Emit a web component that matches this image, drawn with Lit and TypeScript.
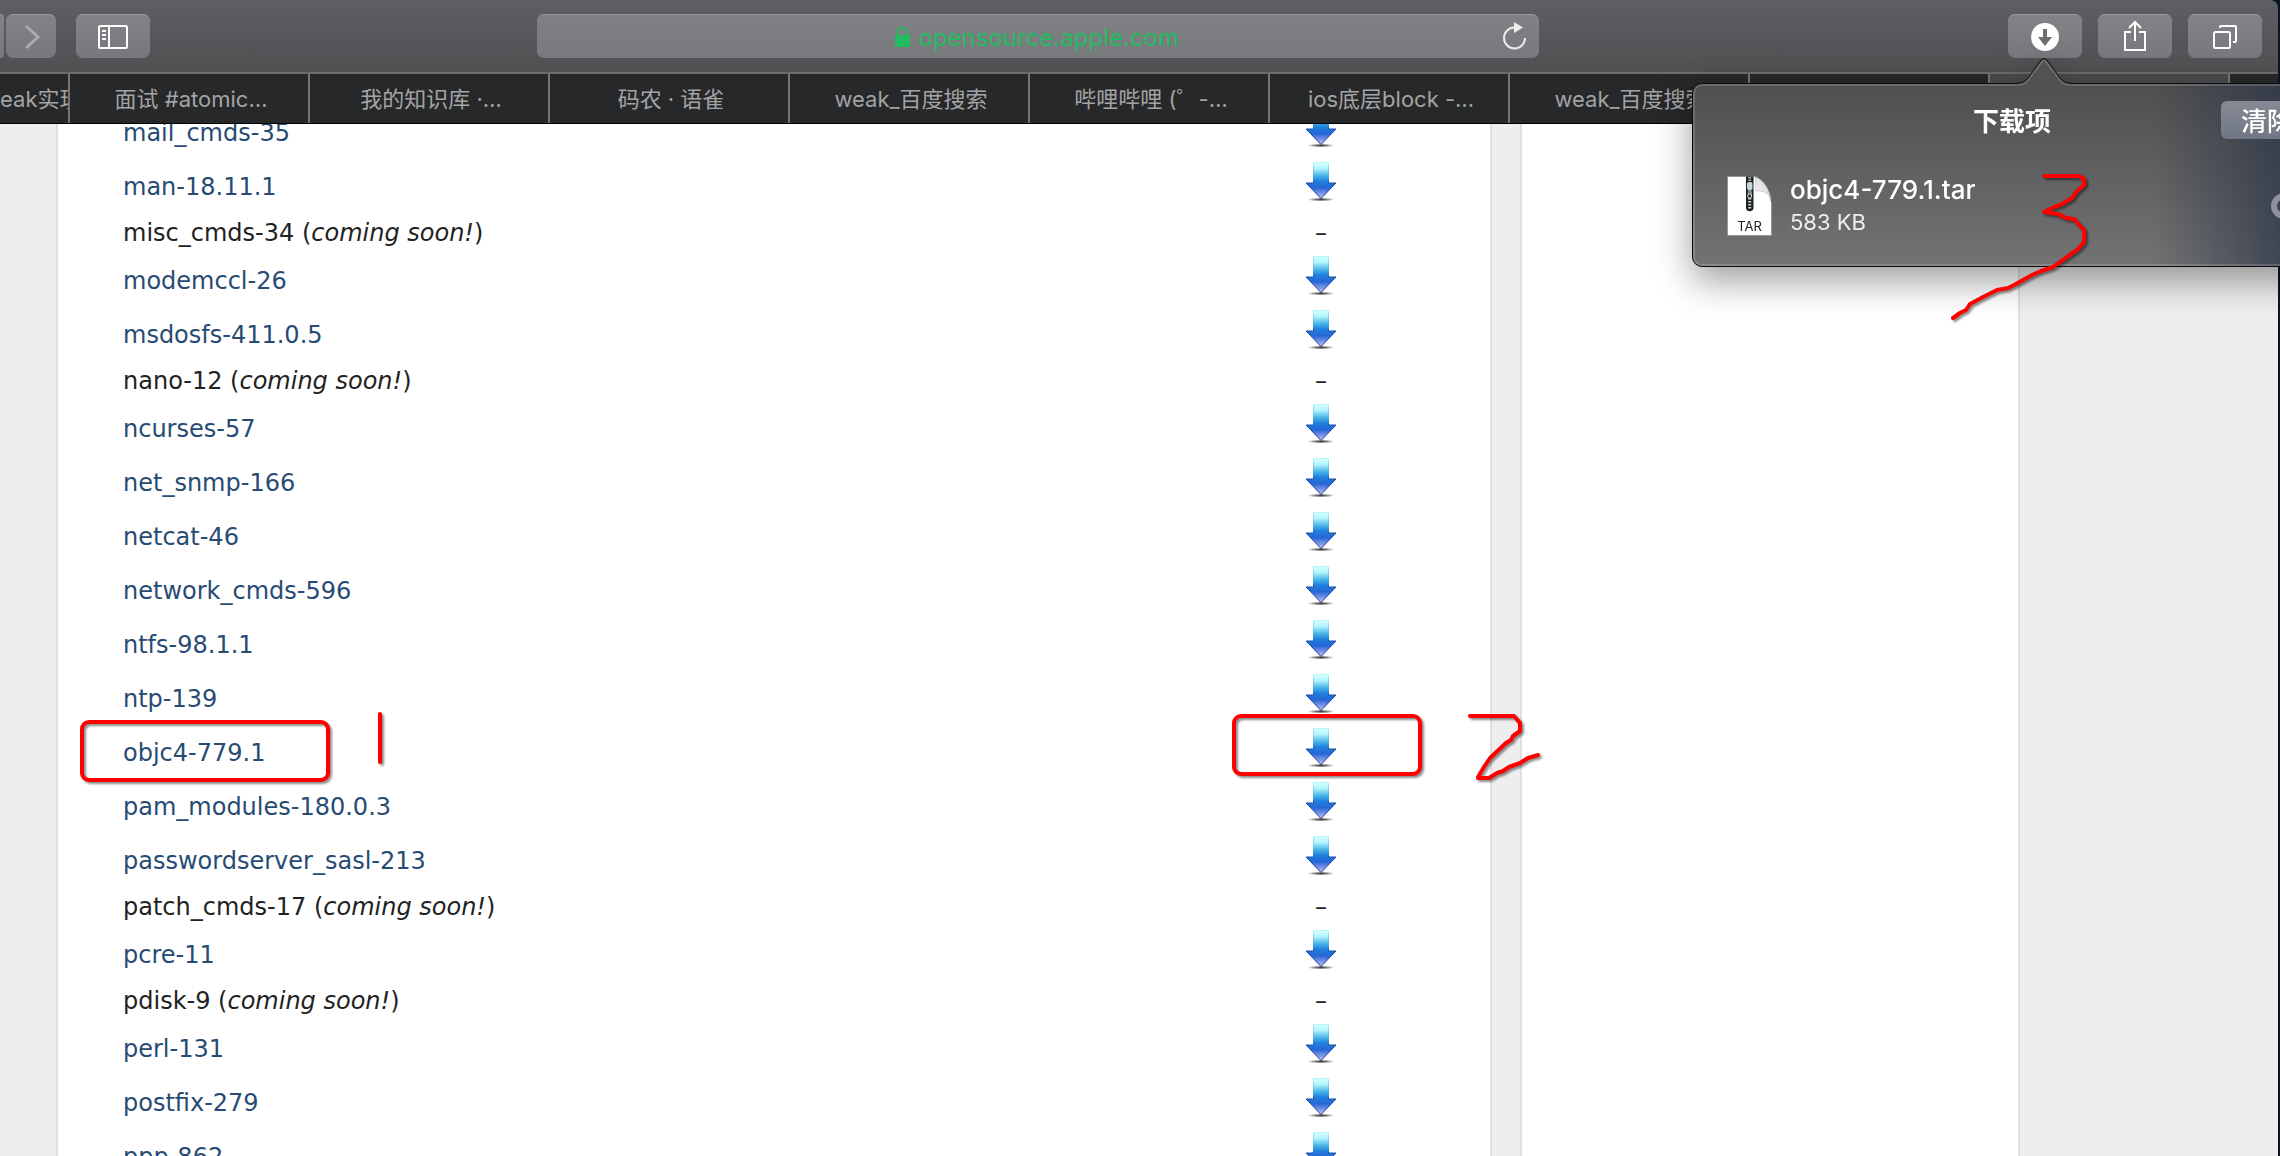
import { LitElement, html, css, nothing } from "lit";
import { customElement, property } from "lit/decorators.js";

interface Project {
  name: string;
  soon?: boolean;
}

const PROJECTS: Project[] = [
  { name: "mail_cmds-35" },
  { name: "man-18.11.1" },
  { name: "misc_cmds-34", soon: true },
  { name: "modemccl-26" },
  { name: "msdosfs-411.0.5" },
  { name: "nano-12", soon: true },
  { name: "ncurses-57" },
  { name: "net_snmp-166" },
  { name: "netcat-46" },
  { name: "network_cmds-596" },
  { name: "ntfs-98.1.1" },
  { name: "ntp-139" },
  { name: "objc4-779.1" },
  { name: "pam_modules-180.0.3" },
  { name: "passwordserver_sasl-213" },
  { name: "patch_cmds-17", soon: true },
  { name: "pcre-11" },
  { name: "pdisk-9", soon: true },
  { name: "perl-131" },
  { name: "postfix-279" },
  { name: "ppp-862" },
];

const TABS: string[] = [
  "weak实现",
  "面试 #atomic…",
  "我的知识库 ·…",
  "码农 · 语雀",
  "weak_百度搜索",
  "哔哩哔哩 (゜-…",
  "ios底层block -…",
  "weak_百度搜索",
  "",
  "",
  "",
];
const ACTIVE_TAB = 9;

/** Glossy blue arrow that links to a tarball. */
@customElement("download-arrow")
export class DownloadArrow extends LitElement {
  static styles = css`
    :host { display: inline-block; }
    .arrow { display: block; width: 32px; height: 40px; }
  `;
  render() {
    return html`<svg class="arrow" viewBox="0 0 32 40" aria-hidden="true">
      <defs>
        <linearGradient id="fill" x1="0" y1="0" x2="0" y2="1">
          <stop offset="0" stop-color="#d2ffff" />
          <stop offset="0.16" stop-color="#b4f6fc" />
          <stop offset="0.36" stop-color="#49b6ea" />
          <stop offset="0.52" stop-color="#2080dc" />
          <stop offset="0.7" stop-color="#2566d6" />
          <stop offset="0.84" stop-color="#6f8fe6" />
          <stop offset="1" stop-color="#c8c8f4" />
        </linearGradient>
        <linearGradient id="edge" x1="0" y1="0" x2="0" y2="1">
          <stop offset="0" stop-color="#b8f4f8" />
          <stop offset="0.45" stop-color="#3a9bd8" />
          <stop offset="0.58" stop-color="#1647a4" />
          <stop offset="1" stop-color="#2a2a90" />
        </linearGradient>
        <radialGradient id="shade">
          <stop offset="0" stop-color="#222" stop-opacity="0.9" />
          <stop offset="0.5" stop-color="#444" stop-opacity="0.6" />
          <stop offset="1" stop-color="#888" stop-opacity="0" />
        </radialGradient>
      </defs>
      <ellipse cx="16" cy="37.5" rx="14" ry="2" fill="url(#shade)" />
      <path d="M8.5 .5h15v20.500h7.500L16 36.500 1 21h7.500z" fill="url(#fill)" stroke="url(#edge)" />
    </svg>`;
  }
}

@customElement("project-table")
export class ProjectTable extends LitElement {
  @property({ attribute: false }) projects: Project[] = [];

  static styles = css`
    :host { display: block; }
    .table {
      width: 100%;
      border-collapse: collapse;
      font: 24px/32px "DejaVu Sans", "Noto Sans", sans-serif;
      color: #222;
    }
    .row { height: 54px; }
    .row.soon { height: 40px; }
    .name, .get { padding: 0; vertical-align: middle; }
    .name { text-align: left; white-space: nowrap; font-weight: 400; }
    .row:not(.soon) .name { padding-top: 2px; }
    .get { width: 188px; text-align: center; }
    .row:not(.soon) .get { padding-bottom: 8px; }
    .link { color: #274b73; text-decoration: none; }
    .icon { display: block; }
    download-arrow { vertical-align: top; }
  `;
  render() {
    return html`<table class="table" aria-label="Projects">
      <tbody>
        ${this.projects.map(
          (p) => html`<tr class="row ${p.soon ? "soon" : ""}">
            <th class="name" scope="row">
              ${p.soon
                ? html`${p.name} (<em>coming soon!</em>)`
                : html`<a class="link" href="#${p.name}">${p.name}</a>`}
            </th>
            <td class="get">
              ${p.soon
                ? "–"
                : html`<a class="icon" href="#${p.name}.tar.gz" aria-label="Download ${p.name}"><download-arrow></download-arrow></a>`}
            </td>
          </tr>`
        )}
      </tbody>
    </table>`;
  }
}

@customElement("downloads-popover")
export class DownloadsPopover extends LitElement {
  static styles = css`
    :host {
      display: block;
      color: #fff;
      font-family: Inter, Roboto, "Noto Sans CJK SC", sans-serif;
      filter: drop-shadow(0 14px 18px rgba(0, 0, 0, 0.38));
    }
    .panel {
      box-sizing: border-box;
      width: 640px;
      height: 184px;
      border: 1px solid #0c0c0c;
      border-radius: 10px;
      box-shadow: inset 0 0 0 2px rgba(255, 255, 255, 0.16);
      background:
        linear-gradient(90deg, rgba(40, 50, 68, 0) 72%, rgba(40, 50, 68, 0.75) 94%),
        linear-gradient(#4f4f4f, #737373);
    }
    .tip { position: absolute; left: 322px; top: -26px; width: 60px; height: 30px; }
    .head {
      display: grid;
      grid-template-columns: 1fr auto 1fr;
      align-items: center;
      padding: 16px 18px 0;
      height: 40px;
    }
    .title {
      grid-column: 2;
      margin: 0;
      font: 700 26px/40px "Noto Sans CJK SC", sans-serif;
    }
    .clear {
      justify-self: end;
      width: 92px;
      height: 38px;
      padding: 0;
      border: 0;
      border-radius: 6px;
      color: #fff;
      background: linear-gradient(#858a94, #707784);
      font: 500 26px/36px "Noto Sans CJK SC", sans-serif;
    }
    .item {
      display: flex;
      align-items: center;
      gap: 18px;
      padding: 34px 34px 0;
    }
    .file { flex: none; width: 45px; height: 60px; }
    .info { flex: 1; }
    .filename { font-size: 26px; line-height: 32px; font-weight: 500; }
    .size { font-size: 22px; line-height: 32px; color: #eee; }
    .reveal { padding: 0; border: 0; background: none; width: 26px; height: 26px; }
    .reveal-icon { display: block; width: 26px; height: 26px; }
  `;
  render() {
    return html`<section class="panel" aria-label="下载项">
        <div class="head">
          <h2 class="title">下载项</h2>
          <button class="clear">清除</button>
        </div>
        <div class="item">
          <svg class="file" viewBox="0 0 45 60" aria-hidden="true">
            <defs>
              <linearGradient id="curl" x1="0" y1="1" x2="1" y2="0">
                <stop offset="0" stop-color="#fff" /><stop offset="1" stop-color="#c9c9c9" />
              </linearGradient>
            </defs>
            <path d="M0.500 .5h28C31 8 42 12 44.500 27v32.500h-44z" fill="#fff" stroke="#777" stroke-opacity=".5" />
            <path d="M28.500 .8C36 4 42 12 44.300 24 41 16 36 14.500 29 15z" fill="url(#curl)" stroke="#aaa" stroke-width=".5" />
            <path d="M19 .5h7.500v31a3.700 3.700 0 0 1-7.500 0z" fill="#1c2224" />
            <path d="M22.700 16v18" stroke="#c8d0d0" stroke-width="3" stroke-dasharray="1.500 1.500" />
            <path d="M22.700 1v5" stroke="#9aa" stroke-width="3" stroke-dasharray="1.500 1" />
            <rect x="20" y="6" width="5.500" height="8" rx="2" fill="#c6dadb" />
            <path d="M21 14h3.500l.6 5.500h-4.600z" fill="#7c8d8f" />
            <circle cx="22.700" cy="20" r="2" fill="#1c2224" stroke="#d5e2e2" />
            <text x="22.500" y="55" text-anchor="middle" font-family="Inter, sans-serif" font-size="13" fill="#222">TAR</text>
          </svg>
          <div class="info">
            <div class="filename">objc4-779.1.tar</div>
            <div class="size">583 KB</div>
          </div>
          <button class="reveal" aria-label="在访达中显示">
            <svg class="reveal-icon" viewBox="0 0 26 26" aria-hidden="true">
              <circle cx="13" cy="13" r="10" fill="none" stroke="#8d929c" stroke-width="6" />
            </svg>
          </button>
        </div>
      </section>
      <svg class="tip" viewBox="0 0 60 30" aria-hidden="true">
        <path d="M0 30V26.500C11 26.500 13 23 17 17L27 3.500Q30 0 33 3.500L43 17C47 23 49 26.500 60 26.500V30z" fill="#525252" />
        <path d="M0 28C12 28 14 24 18 18L28 5Q30 2 32 5L42 18C46 24 48 28 60 28" fill="none" stroke="#707070" stroke-width="1.500" />
        <path d="M0 26.500C11 26.500 13 23 17 17L27 3Q30 0 33 3L43 17C47 23 49 26.500 60 26.500" fill="none" stroke="#0c0c0c" />
      </svg>`;
  }
}

@customElement("app-root")
export class AppRoot extends LitElement {
  static styles = css`
    :host { display: block; }
    .window {
      position: relative;
      display: flex;
      flex-direction: column;
      height: 100vh;
      overflow: hidden;
      box-sizing: border-box;
      padding-right: 2px;
      background: #0d1524;
    }
    .toolbar {
      position: relative;
      z-index: 2;
      display: grid;
      grid-template-columns: minmax(0, 537fr) minmax(0, 1002fr) minmax(0, 739fr);
      box-sizing: border-box;
      height: 74px;
      padding-top: 14px;
      border-bottom: 2px solid #6c6d6f;
      border-top-right-radius: 8px;
      background: linear-gradient(#5d5f62, #4f5052);
    }
    .group { display: flex; align-items: flex-start; }
    .group.end { justify-content: flex-end; gap: 16px; padding-right: 16px; }
    .button {
      display: grid;
      place-items: center;
      box-sizing: border-box;
      height: 44px;
      width: 74px;
      padding: 0;
      border: 0;
      border-top: 1px solid #9a9b9d;
      border-radius: 7px;
      background: linear-gradient(#828386, #77787b);
    }
    .button.back { width: 4px; border-radius: 0 7px 7px 0; }
    .button.forward { width: 50px; margin: 0 20px 0 2px; }
    .glyph { display: block; width: 48px; height: 42px; fill: none; stroke: #fff; stroke-width: 2; }
    .glyph.dim { stroke: #abacae; stroke-width: 3; }
    .anchor { position: relative; }
    .popover { position: absolute; left: -316px; top: 69px; }
    .address {
      display: grid;
      grid-template-columns: 50px 1fr 50px;
      align-items: center;
      height: 44px;
      box-sizing: border-box;
      border-top: 1px solid #959799;
      border-radius: 7px;
      background: linear-gradient(#808184, #78797c);
    }
    .site { grid-column: 2; display: flex; justify-content: center; align-items: center; gap: 8px; color: #23bb61; }
    .lock { width: 17px; height: 22px; }
    .url {
      width: 264px;
      height: 38px;
      padding: 2px 0 0;
      box-sizing: border-box;
      border: 0;
      outline: 0;
      background: none;
      color: inherit;
      font: 24px/36px Inter, Roboto, sans-serif;
    }
    .reload { display: block; justify-self: center; width: 30px; height: 36px; padding: 0; border: 0; background: none; }
    .reload-icon { display: block; width: 30px; height: 36px; }
    .tabs {
      display: grid;
      grid-template-columns: minmax(0, 70fr) repeat(9, minmax(0, 240fr)) minmax(0, 48fr);
      height: 50px;
      box-sizing: border-box;
      border-bottom: 1px solid #000;
      background: #272829;
    }
    .tab {
      display: flex;
      align-items: center;
      justify-content: center;
      box-sizing: border-box;
      min-width: 0;
      padding: 0 0 0 4px;
      overflow: hidden;
      border: 0;
      border-right: 2px solid #747576;
      border-radius: 0;
      background: none;
      color: #a3a4a5;
      white-space: nowrap;
      font: 22px/48px Inter, "Noto Sans CJK SC", sans-serif;
    }
    .tab:first-child { padding: 0 4px 0 0; }
    .tab:last-child { border-right: 0; }
    .tab.active { background: #4a4b4d; }
    .page {
      flex: 1;
      min-height: 0;
      overflow: hidden;
      display: grid;
      grid-template-columns: minmax(0, 1432fr) minmax(0, 496fr);
      column-gap: 32px;
      padding: 0 260px 0 58px;
      background: #eee;
    }
    .sheet { min-height: 0; box-shadow: 0 0 0 2px #e0e0e0; background: #fff; }
    .list { margin: -19px 75px 0 65px; }
    .marks {
      position: absolute;
      left: 0;
      top: 0;
      z-index: 3;
      width: 100%;
      height: 100%;
      pointer-events: none;
      fill: none;
      stroke: #f00;
      stroke-width: 4;
      stroke-linecap: round;
      stroke-linejoin: round;
      filter: drop-shadow(2px 2px 1px rgba(0, 0, 0, 0.45));
    }
  `;

  render() {
    return html`<div class="window">
      <header class="toolbar">
        <div class="group">
          <button class="button back" aria-label="后退"></button>
          <button class="button forward" aria-label="前进" disabled>
            <svg class="glyph dim" viewBox="0 0 48 42" aria-hidden="true"><path d="M19 10l12 11-12 11" /></svg>
          </button>
          <button class="button" aria-label="边栏">
            <svg class="glyph" viewBox="0 0 48 42" aria-hidden="true">
              <rect x="10" y="10" width="28" height="22" rx="1.500" />
              <path d="M20 10v22M13 15h4M13 19h4M13 23h4" />
            </svg>
          </button>
        </div>
        <div class="address">
          <div class="site">
            <svg class="lock" viewBox="0 0 17 22" aria-hidden="true">
              <rect x="1" y="9" width="15" height="12" rx="1" fill="currentColor" />
              <path d="M3.500 10V7a5 5.500 0 0 1 10 0v3" fill="none" stroke="currentColor" stroke-width="2" />
            </svg>
            <input class="url" type="text" aria-label="地址" .value=${"opensource.apple.com"} />
          </div>
          <button class="reload" aria-label="重新载入">
            <svg class="reload-icon" viewBox="0 0 30 36" aria-hidden="true">
              <path d="M15 8.500A10.500 10.500 0 1 0 26 19" fill="none" stroke="#eee" stroke-width="2" />
              <path d="M15 3l9 5.500L15 14z" fill="#eee" />
            </svg>
          </button>
        </div>
        <div class="group end">
          <div class="anchor">
            <button class="button" aria-label="下载">
              <svg class="glyph" viewBox="0 0 48 42" aria-hidden="true">
                <circle cx="24" cy="21" r="14" fill="#fff" stroke="none" />
                <path d="M24 13v10" stroke="#6d6e71" stroke-width="4" />
                <path d="M17 21h14l-7 9z" fill="#6d6e71" stroke="none" />
              </svg>
            </button>
            <downloads-popover class="popover"></downloads-popover>
          </div>
          <button class="button" aria-label="共享">
            <svg class="glyph" viewBox="0 0 48 42" aria-hidden="true">
              <path d="M20 16h-6v18h20V16h-6M24 25V6M18 12l6-6 6 6" />
            </svg>
          </button>
          <button class="button" aria-label="标签页概览">
            <svg class="glyph" viewBox="0 0 48 42" aria-hidden="true">
              <rect x="13" y="16" width="16" height="16" rx="1.500" />
              <path d="M19 12V11Q19 10 20 10H34Q35 10 35 11V25Q35 26 34 26H32" />
            </svg>
          </button>
        </div>
      </header>
      <nav class="tabs" aria-label="标签页">
        ${TABS.map(
          (t, i) => html`<button class="tab ${i === ACTIVE_TAB ? "active" : ""}" aria-label=${t ? nothing : "标签页"}>${t}</button>`
        )}
      </nav>
      <main class="page">
        <div class="sheet"><project-table class="list" .projects=${PROJECTS}></project-table></div>
        <aside class="sheet"></aside>
      </main>
      <svg class="marks" aria-hidden="true">
        <rect x="82" y="722" width="246" height="58" rx="7" />
        <rect x="1234" y="716" width="186" height="58" rx="7" />
        <path d="M380 714V762" />
        <path d="M1470 716H1514L1520 723V731L1513 736 1511 740 1506 743 1490 758 1484 767 1478 777V778H1489L1497 773 1503 771 1509 767 1520 763 1528 758 1538 755" />
        <path d="M2044 176H2079L2084 179V185L2076 192 2072 198 2062 204 2052 208 2044 212 2058 214 2066 218 2074 219 2084 230V242L2078 249 2053 267 2041 271 2032 275 2014 285 2008 288 1997 290 1983 297 1970 304 1966 310 1960 313 1953 318" />
      </svg>
    </div>`;
  }
}
